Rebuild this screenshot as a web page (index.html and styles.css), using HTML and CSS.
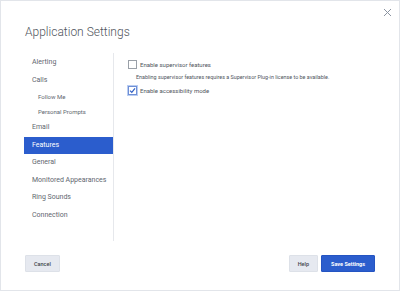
FILE: index.html
```html
<!DOCTYPE html>
<html lang="en">
<head>
  <meta charset="UTF-8">
  <title>Application Settings</title>
  <link rel="stylesheet" href="styles.css">
</head>
<body>
  <div class="dialog">
    <div class="dialog-header">
      <h1>Application Settings</h1>
      <svg class="close" width="9" height="9" viewBox="0 0 9 9">
        <path d="M1 1L8 8M8 1L1 8" stroke="#8b94a1" stroke-width="1" fill="none"/>
      </svg>
    </div>

    <div class="dialog-body">
      <ul class="nav">
        <li class="nav-item">Alerting</li>
        <li class="nav-item">Calls</li>
        <li class="nav-item sub">Follow Me</li>
        <li class="nav-item sub">Personal Prompts</li>
        <li class="nav-item">Email</li>
        <li class="nav-item active">Features</li>
        <li class="nav-item">General</li>
        <li class="nav-item">Monitored Appearances</li>
        <li class="nav-item">Ring Sounds</li>
        <li class="nav-item">Connection</li>
      </ul>

      <div class="content">
        <label class="option">
          <span class="checkbox"></span>
          <span>Enable supervisor features</span>
        </label>
        <p class="hint">Enabling supervisor features requires a Supervisor Plug-in license to be available.</p>
        <label class="option">
          <span class="checkbox checked focused">
            <svg width="7" height="7" viewBox="0 0 7 7">
              <path d="M1 3.6L2.8 5.4L6 1.4" stroke="#2f5fc4" stroke-width="1.2" fill="none"/>
            </svg>
          </span>
          <span>Enable accessibility mode</span>
        </label>
      </div>
    </div>

    <div class="dialog-footer">
      <button class="btn">Cancel</button>
      <div class="spacer"></div>
      <button class="btn">Help</button>
      <button class="btn primary">Save Settings</button>
    </div>
  </div>
</body>
</html>
```

FILE: styles.css
```css
html, body {
  margin: 0;
  padding: 0;
  background: #fff;
  font-family: Roboto, 'Liberation Sans', sans-serif;
  color: #4a4f57;
}

.dialog {
  width: 400px;
  height: 291px;
  box-sizing: border-box;
  border: 1px solid #e2e5ea;
  background: #fff;
  display: flex;
  flex-direction: column;
}

.dialog-header {
  position: relative;
  padding: 20px 24px 0;
  height: 32px;
}

.dialog-header h1 {
  margin: 0;
  font-size: 12px;
  font-weight: 300;
  line-height: 22px;
  color: #50555d;
}

.close {
  position: absolute;
  top: 7px;
  right: 7px;
}

.dialog-body {
  display: flex;
  height: 188px;
  padding-left: 23px;
}

.nav {
  list-style: none;
  margin: 0;
  padding: 1px 0 0;
  width: 89px;
  border-right: 1px solid #e6e8ec;
}

.nav-item {
  height: 17.5px;
  line-height: 17.5px;
  padding-left: 8px;
  font-size: 7px;
  color: #62676f;
  white-space: nowrap;
}

.nav-item.sub {
  height: 15px;
  line-height: 15px;
  padding-left: 14px;
  font-size: 6px;
}

.nav-item.active {
  background: #2b5dcd;
  color: #fff;
}

.content {
  padding: 7px 14px;
}

.option {
  display: flex;
  align-items: center;
  gap: 3px;
  font-size: 6px;
  color: #50555d;
  height: 9px;
}

.checkbox {
  width: 7px;
  height: 7px;
  border: 1px solid #9aa0a8;
  background: #fff;
  display: flex;
  align-items: center;
  justify-content: center;
}

.checkbox.focused {
  border-color: #6f8fd6;
  box-shadow: 0 0 0 1px #b9cdf2;
}

.hint {
  margin: 0;
  padding: 4px 0 4px 8px;
  font-size: 5.4px;
  line-height: 9px;
  color: #50555d;
}

.dialog-footer {
  display: flex;
  align-items: center;
  padding: 14px 24px 0;
  gap: 3px;
}

.spacer {
  flex: 1;
}

.btn {
  height: 17px;
  padding: 0 8px;
  border: 1px solid #dde1e8;
  background: #e6e9f0;
  color: #3f444c;
  font-family: Roboto, 'Liberation Sans', sans-serif;
  font-size: 5.5px;
  font-weight: 500;
  border-radius: 1px;
}

.btn.primary {
  padding: 0 9px;
  background: #2b5dcd;
  border-color: #2454c2;
  color: #fff;
  font-weight: 700;
}
```
